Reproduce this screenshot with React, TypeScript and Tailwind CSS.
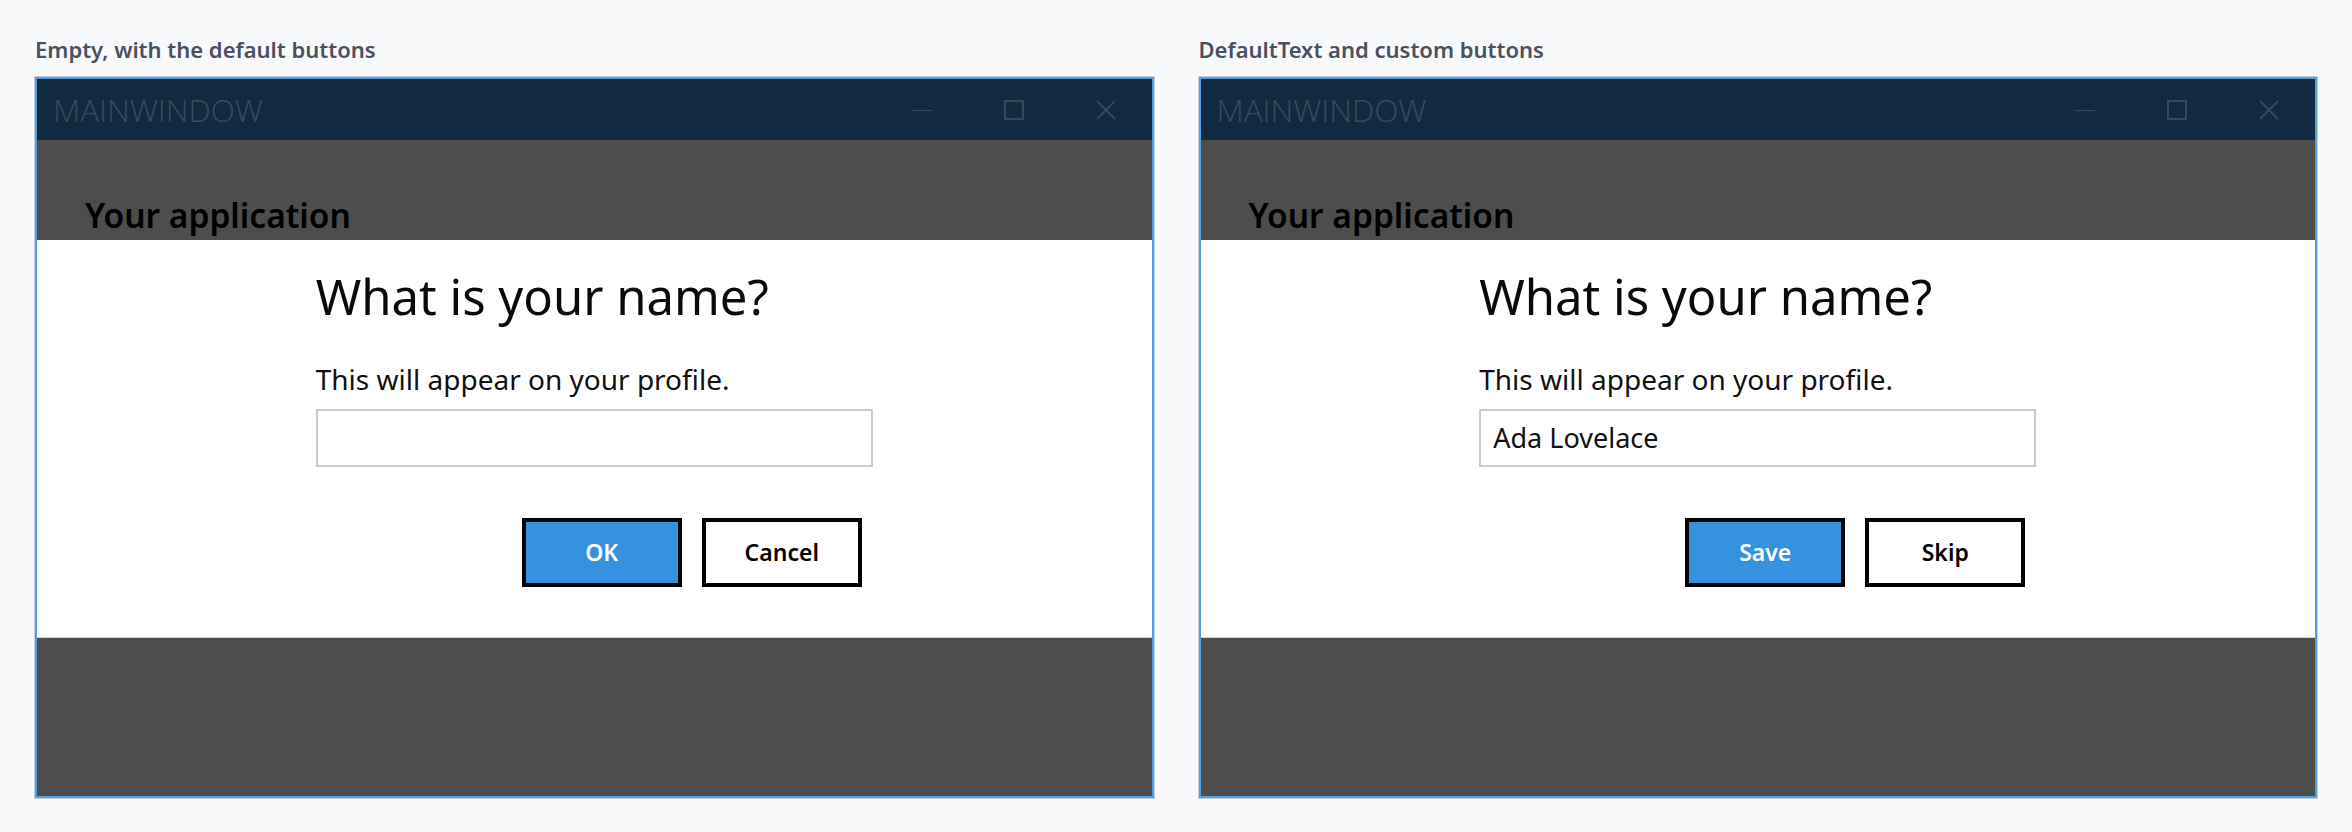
import React from 'react';

// Two demo frames of a modal "prompt" dialog shown over a fake app window

type Demo = {
  caption: string;
  value: string;
  primary: string;
  secondary: string;
};

const demos: Demo[] = [
  { caption: 'Empty, with the default buttons', value: '', primary: 'OK', secondary: 'Cancel' },
  { caption: 'DefaultText and custom buttons', value: 'Ada Lovelace', primary: 'Save', secondary: 'Skip' },
];

const font = { fontFamily: '"Noto Sans", "Open Sans", Arial, sans-serif' };

const TitleBar: React.FC = () => (
  <div className="flex h-[61px] items-center bg-[#112a41]">
    <span className="flex-1 pl-[16px] font-['Open_Sans',sans-serif] text-[31.5px] font-light leading-[1.2] text-[#3e4955]">
      MAINWINDOW
    </span>
    <div className="flex h-full">
      {/* minimize */}
      <div className="flex w-[92px] items-center justify-center">
        <svg width="20" height="20" viewBox="0 0 20 20">
          <line x1="0" y1="10.5" x2="20" y2="10.5" stroke="#3c4753" strokeWidth="1.2" />
        </svg>
      </div>
      {/* maximize */}
      <div className="flex w-[92px] items-center justify-center">
        <svg width="20" height="20" viewBox="0 0 20 20">
          <rect x="1" y="1" width="18" height="18" fill="none" stroke="#3c4753" strokeWidth="2" />
        </svg>
      </div>
      {/* close */}
      <div className="flex w-[92px] items-center justify-center">
        <svg width="20" height="20" viewBox="0 0 20 20">
          <path d="M1 1 L19 19 M19 1 L1 19" stroke="#3c4753" strokeWidth="2" />
        </svg>
      </div>
    </div>
  </div>
);

const Window: React.FC<{ demo: Demo }> = ({ demo }) => (
  <div className="flex h-[721px] flex-col border-2 border-[#4ea1e6] shadow-[0_0_0_1px_#c9ced6]">
    <TitleBar />

    {/* app content behind the dialog */}
    <div className="h-[100px] bg-[#4d4d4d] pl-[48px] pt-[55px]">
      <h1 className="text-[33.5px] font-semibold leading-[1.2] text-black">Your application</h1>
    </div>

    {/* dialog band */}
    <div className="flex h-[398px] justify-center border-b border-[#d6d6d6] bg-white pt-[27px]">
      <div className="flex w-[557px] flex-col">
        <h2 className="text-[49px] font-normal leading-[1.2] text-[#0a0a0a]">What is your name?</h2>
        <p className="mt-[37px] text-[28px] leading-[1.2] text-[#111]">This will appear on your profile.</p>
        <div className="mt-[12px] flex h-[58px] items-center border-2 border-[#cccccc] px-[12px] text-[27px] text-[#111]">
          {demo.value}
        </div>
        <div className="mt-[51px] flex justify-end gap-[20px] pr-[11px]">
          <button className="flex h-[69px] w-[160px] items-center justify-center border-[4px] border-black bg-[#3592de] text-[23px] font-semibold text-white">
            {demo.primary}
          </button>
          <button className="flex h-[69px] w-[160px] items-center justify-center border-[4px] border-black bg-white text-[23px] font-semibold text-black">
            {demo.secondary}
          </button>
        </div>
      </div>
    </div>

    <div className="flex-1 bg-[#4d4d4d]" />
  </div>
);

const App: React.FC = () => {
  return (
    <div className="flex h-[832px] w-full gap-[45px] bg-[#f8f9fb] px-[35px] pt-[36px]" style={font}>
      {demos.map((demo) => (
        <section key={demo.caption} className="flex flex-1 flex-col">
          <div className="text-[22px] font-semibold leading-[1.2] text-[#4b5160]">{demo.caption}</div>
          <div className="mt-[15px]">
            <Window demo={demo} />
          </div>
        </section>
      ))}
    </div>
  );
};

export default App;
